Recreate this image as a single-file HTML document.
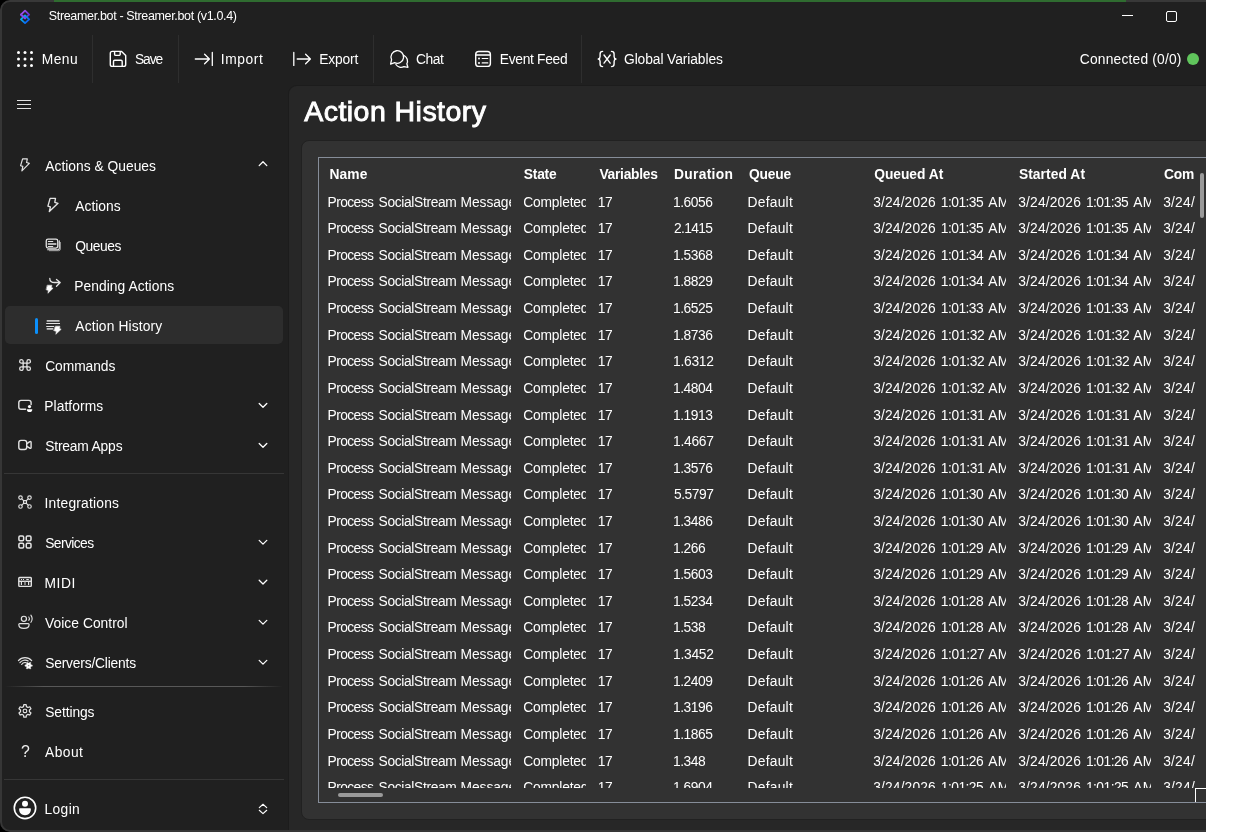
<!DOCTYPE html>
<html lang="en"><head><meta charset="utf-8"><title>Streamer.bot - Action History</title>
<style>
html,body{margin:0;padding:0;background:#fff;}
body{width:1239px;height:832px;overflow:hidden;position:relative;font-family:"Liberation Sans",sans-serif;color:#fff;}
#clip{position:absolute;left:0;top:0;width:1206px;height:832px;overflow:hidden;background:#000;}
#win{will-change:transform;position:absolute;left:0;top:0;width:1230px;height:832px;background:#202020;border-radius:10px 0 0 10px;overflow:hidden;}
.tx{position:absolute;white-space:nowrap;line-height:1;font-size:13.8px;}
.cl{position:absolute;overflow:hidden;top:0;height:832px;left:0;}
.sep{position:absolute;width:1px;background:#2e2e2e;top:35px;height:48px;}
.hsep{position:absolute;height:1px;background:#363636;left:4px;width:280px;}
#content{position:absolute;left:288px;top:85px;width:942px;height:746px;background:#272727;border-top-left-radius:9px;border:1px solid #1c1c1c;border-right:0;border-bottom:0;box-sizing:border-box;}
#card{position:absolute;left:301px;top:140px;width:931px;height:680px;background:#323232;border-radius:8px;border:1px solid #212121;box-sizing:border-box;}
#tbl{position:absolute;left:318px;top:157px;width:900px;height:646px;border:1px solid #868d99;box-sizing:border-box;}
#rows{position:absolute;left:0;top:0;width:1206px;height:788px;overflow:hidden;}
svg{position:absolute;overflow:visible;}
</style></head><body>
<div id="clip">
<div id="win">
<div style="position:absolute;left:0;top:0;width:1230px;height:832px;box-sizing:border-box;border:2px solid #363636;border-top-color:#383838;border-right:0;border-radius:10px 0 0 10px;z-index:5"></div>
<div style="position:absolute;left:54px;top:0;width:1072px;height:2px;background:#2f6c30;z-index:6"></div>

<div class="sep" style="left:92px"></div>
<div class="sep" style="left:178px"></div>
<div class="sep" style="left:373px"></div>
<div class="sep" style="left:581px"></div>
<div id="content"></div><div id="card"></div><div id="tbl"></div>
<div style="position:absolute;left:5px;top:306px;width:278px;height:38px;background:#2d2d2d;border-radius:5px"></div>
<div style="position:absolute;left:35px;top:317.5px;width:3px;height:16px;background:#0b8ffa;border-radius:1.5px"></div>
<div class="hsep" style="top:473px"></div>
<div class="hsep" style="top:779px"></div>
<div style="position:absolute;left:5px;top:686px;width:278px;height:1px;background:linear-gradient(to right,rgba(90,90,90,0),#585858 14%,#585858 86%,rgba(90,90,90,0))"></div>
<div style="position:absolute;left:1200px;top:173px;width:4px;height:45px;background:#9a9a9a;border-radius:2px"></div>
<div style="position:absolute;left:338px;top:793px;width:45px;height:4px;background:#9a9a9a;border-radius:2px"></div>
<div style="position:absolute;left:1195px;top:788px;width:20px;height:14px;border-left:1px solid #fff;border-top:1px solid #fff;box-sizing:border-box"></div>
<div class="tx" style="left:48.80px;top:10.00px;letter-spacing:-0.341px;font-size:12.5px">Streamer.bot - Streamer.bot (v1.0.4)</div>
<div class="tx" style="left:41.80px;top:53.00px;letter-spacing:0.454px">Menu</div>
<div class="tx" style="left:135.00px;top:53.00px;letter-spacing:-1.091px">Save</div>
<div class="tx" style="left:220.80px;top:53.00px;letter-spacing:0.587px">Import</div>
<div class="tx" style="left:319.20px;top:53.00px;letter-spacing:-0.148px">Export</div>
<div class="tx" style="left:416.00px;top:53.00px;letter-spacing:-0.437px">Chat</div>
<div class="tx" style="left:499.80px;top:53.00px;letter-spacing:-0.299px">Event Feed</div>
<div class="tx" style="left:624.00px;top:53.00px;letter-spacing:-0.087px">Global Variables</div>
<div class="tx" style="left:1079.80px;top:53.00px;letter-spacing:0.190px">Connected (0/0)</div>
<div class="tx" style="left:45.30px;top:160.00px;letter-spacing:0.011px">Actions &amp; Queues</div>
<div class="tx" style="left:75.30px;top:200.00px;letter-spacing:0.009px">Actions</div>
<div class="tx" style="left:75.30px;top:240.00px;letter-spacing:-0.425px">Queues</div>
<div class="tx" style="left:74.30px;top:280.00px;letter-spacing:0.056px">Pending Actions</div>
<div class="tx" style="left:75.30px;top:320.00px;letter-spacing:0.138px">Action History</div>
<div class="tx" style="left:45.20px;top:360.00px;letter-spacing:-0.063px">Commands</div>
<div class="tx" style="left:44.30px;top:400.00px;letter-spacing:0.067px">Platforms</div>
<div class="tx" style="left:45.20px;top:440.00px;letter-spacing:-0.165px">Stream Apps</div>
<div class="tx" style="left:44.50px;top:497.00px;letter-spacing:0.218px">Integrations</div>
<div class="tx" style="left:45.20px;top:537.00px;letter-spacing:-0.572px">Services</div>
<div class="tx" style="left:44.50px;top:577.00px;letter-spacing:0.537px">MIDI</div>
<div class="tx" style="left:45.00px;top:617.00px;letter-spacing:0.050px">Voice Control</div>
<div class="tx" style="left:45.20px;top:657.00px;letter-spacing:-0.189px">Servers/Clients</div>
<div class="tx" style="left:45.20px;top:706.00px;letter-spacing:-0.079px">Settings</div>
<div class="tx" style="left:45.00px;top:746.00px;letter-spacing:0.445px">About</div>
<div class="tx" style="left:44.50px;top:803.00px;letter-spacing:0.379px">Login</div>
<div class="tx" style="left:304.30px;top:97.00px;letter-spacing:0.450px;font-size:28.5px;-webkit-text-stroke:0.9px #fff">Action History</div>
<div class="tx" style="left:329.60px;top:168.00px;letter-spacing:0.065px;font-weight:700">Name</div>
<div class="tx" style="left:523.80px;top:168.00px;letter-spacing:-0.216px;font-weight:700">State</div>
<div class="tx" style="left:599.40px;top:168.00px;letter-spacing:-0.253px;font-weight:700">Variables</div>
<div class="tx" style="left:674.00px;top:168.00px;letter-spacing:0.302px;font-weight:700">Duration</div>
<div class="tx" style="left:749.00px;top:168.00px;letter-spacing:-0.190px;font-weight:700">Queue</div>
<div class="tx" style="left:874.20px;top:168.00px;letter-spacing:-0.020px;font-weight:700">Queued At</div>
<div class="tx" style="left:1018.90px;top:168.00px;letter-spacing:0.074px;font-weight:700">Started At</div>
<div class="cl" style="width:1194.2px"><div class="tx" style="left:1164.00px;top:168.00px;letter-spacing:-0.246px;font-weight:700">Completed At</div></div>
<div id="rows">
<div class="cl" style="width:511px"><div class="tx" style="left:327.50px;top:196.00px;letter-spacing:-0.573px">Process</div></div>
<div class="cl" style="width:511px"><div class="tx" style="left:378.60px;top:196.00px;letter-spacing:-0.350px">SocialStream</div></div>
<div class="cl" style="width:511px"><div class="tx" style="left:460.60px;top:196.00px;letter-spacing:-0.087px">Message</div></div>
<div class="cl" style="width:585.7px"><div class="tx" style="left:523.20px;top:196.00px;letter-spacing:-0.182px">Completed</div></div>
<div class="tx" style="left:597.80px;top:196.00px;letter-spacing:-0.473px">17</div>
<div class="tx" style="left:673.00px;top:196.00px;letter-spacing:-0.465px">1.6056</div>
<div class="tx" style="left:747.50px;top:196.00px;letter-spacing:0.253px">Default</div>
<div class="cl" style="width:1006.2px"><div class="tx" style="left:873.20px;top:196.00px;letter-spacing:0.149px">3/24/2026</div></div>
<div class="cl" style="width:1006.2px"><div class="tx" style="left:940.80px;top:196.00px;letter-spacing:-0.527px">1:01:35</div></div>
<div class="cl" style="width:1006.2px"><div class="tx" style="left:988.20px;top:196.00px;letter-spacing:0.300px">AM</div></div>
<div class="cl" style="width:1151.1px"><div class="tx" style="left:1018.30px;top:196.00px;letter-spacing:0.149px">3/24/2026</div></div>
<div class="cl" style="width:1151.1px"><div class="tx" style="left:1085.90px;top:196.00px;letter-spacing:-0.527px">1:01:35</div></div>
<div class="cl" style="width:1151.1px"><div class="tx" style="left:1133.30px;top:196.00px;letter-spacing:0.300px">AM</div></div>
<div class="cl" style="width:1194.9px"><div class="tx" style="left:1163.20px;top:196.00px;letter-spacing:0.212px">3/24/2026</div></div>
<div class="cl" style="width:511px"><div class="tx" style="left:327.50px;top:222.00px;letter-spacing:-0.573px">Process</div></div>
<div class="cl" style="width:511px"><div class="tx" style="left:378.60px;top:222.00px;letter-spacing:-0.350px">SocialStream</div></div>
<div class="cl" style="width:511px"><div class="tx" style="left:460.60px;top:222.00px;letter-spacing:-0.087px">Message</div></div>
<div class="cl" style="width:585.7px"><div class="tx" style="left:523.20px;top:222.00px;letter-spacing:-0.182px">Completed</div></div>
<div class="tx" style="left:597.80px;top:222.00px;letter-spacing:-0.473px">17</div>
<div class="tx" style="left:674.00px;top:222.00px;letter-spacing:-0.665px">2.1415</div>
<div class="tx" style="left:747.50px;top:222.00px;letter-spacing:0.253px">Default</div>
<div class="cl" style="width:1006.2px"><div class="tx" style="left:873.20px;top:222.00px;letter-spacing:0.149px">3/24/2026</div></div>
<div class="cl" style="width:1006.2px"><div class="tx" style="left:940.80px;top:222.00px;letter-spacing:-0.527px">1:01:35</div></div>
<div class="cl" style="width:1006.2px"><div class="tx" style="left:988.20px;top:222.00px;letter-spacing:0.300px">AM</div></div>
<div class="cl" style="width:1151.1px"><div class="tx" style="left:1018.30px;top:222.00px;letter-spacing:0.149px">3/24/2026</div></div>
<div class="cl" style="width:1151.1px"><div class="tx" style="left:1085.90px;top:222.00px;letter-spacing:-0.527px">1:01:35</div></div>
<div class="cl" style="width:1151.1px"><div class="tx" style="left:1133.30px;top:222.00px;letter-spacing:0.300px">AM</div></div>
<div class="cl" style="width:1194.9px"><div class="tx" style="left:1163.20px;top:222.00px;letter-spacing:0.212px">3/24/2026</div></div>
<div class="cl" style="width:511px"><div class="tx" style="left:327.50px;top:249.00px;letter-spacing:-0.573px">Process</div></div>
<div class="cl" style="width:511px"><div class="tx" style="left:378.60px;top:249.00px;letter-spacing:-0.350px">SocialStream</div></div>
<div class="cl" style="width:511px"><div class="tx" style="left:460.60px;top:249.00px;letter-spacing:-0.087px">Message</div></div>
<div class="cl" style="width:585.7px"><div class="tx" style="left:523.20px;top:249.00px;letter-spacing:-0.182px">Completed</div></div>
<div class="tx" style="left:597.80px;top:249.00px;letter-spacing:-0.473px">17</div>
<div class="tx" style="left:673.00px;top:249.00px;letter-spacing:-0.465px">1.5368</div>
<div class="tx" style="left:747.50px;top:249.00px;letter-spacing:0.253px">Default</div>
<div class="cl" style="width:1006.2px"><div class="tx" style="left:873.20px;top:249.00px;letter-spacing:0.149px">3/24/2026</div></div>
<div class="cl" style="width:1006.2px"><div class="tx" style="left:940.80px;top:249.00px;letter-spacing:-0.527px">1:01:34</div></div>
<div class="cl" style="width:1006.2px"><div class="tx" style="left:988.20px;top:249.00px;letter-spacing:0.300px">AM</div></div>
<div class="cl" style="width:1151.1px"><div class="tx" style="left:1018.30px;top:249.00px;letter-spacing:0.149px">3/24/2026</div></div>
<div class="cl" style="width:1151.1px"><div class="tx" style="left:1085.90px;top:249.00px;letter-spacing:-0.527px">1:01:34</div></div>
<div class="cl" style="width:1151.1px"><div class="tx" style="left:1133.30px;top:249.00px;letter-spacing:0.300px">AM</div></div>
<div class="cl" style="width:1194.9px"><div class="tx" style="left:1163.20px;top:249.00px;letter-spacing:0.212px">3/24/2026</div></div>
<div class="cl" style="width:511px"><div class="tx" style="left:327.50px;top:275.00px;letter-spacing:-0.573px">Process</div></div>
<div class="cl" style="width:511px"><div class="tx" style="left:378.60px;top:275.00px;letter-spacing:-0.350px">SocialStream</div></div>
<div class="cl" style="width:511px"><div class="tx" style="left:460.60px;top:275.00px;letter-spacing:-0.087px">Message</div></div>
<div class="cl" style="width:585.7px"><div class="tx" style="left:523.20px;top:275.00px;letter-spacing:-0.182px">Completed</div></div>
<div class="tx" style="left:597.80px;top:275.00px;letter-spacing:-0.473px">17</div>
<div class="tx" style="left:673.00px;top:275.00px;letter-spacing:-0.465px">1.8829</div>
<div class="tx" style="left:747.50px;top:275.00px;letter-spacing:0.253px">Default</div>
<div class="cl" style="width:1006.2px"><div class="tx" style="left:873.20px;top:275.00px;letter-spacing:0.149px">3/24/2026</div></div>
<div class="cl" style="width:1006.2px"><div class="tx" style="left:940.80px;top:275.00px;letter-spacing:-0.527px">1:01:34</div></div>
<div class="cl" style="width:1006.2px"><div class="tx" style="left:988.20px;top:275.00px;letter-spacing:0.300px">AM</div></div>
<div class="cl" style="width:1151.1px"><div class="tx" style="left:1018.30px;top:275.00px;letter-spacing:0.149px">3/24/2026</div></div>
<div class="cl" style="width:1151.1px"><div class="tx" style="left:1085.90px;top:275.00px;letter-spacing:-0.527px">1:01:34</div></div>
<div class="cl" style="width:1151.1px"><div class="tx" style="left:1133.30px;top:275.00px;letter-spacing:0.300px">AM</div></div>
<div class="cl" style="width:1194.9px"><div class="tx" style="left:1163.20px;top:275.00px;letter-spacing:0.212px">3/24/2026</div></div>
<div class="cl" style="width:511px"><div class="tx" style="left:327.50px;top:302.00px;letter-spacing:-0.573px">Process</div></div>
<div class="cl" style="width:511px"><div class="tx" style="left:378.60px;top:302.00px;letter-spacing:-0.350px">SocialStream</div></div>
<div class="cl" style="width:511px"><div class="tx" style="left:460.60px;top:302.00px;letter-spacing:-0.087px">Message</div></div>
<div class="cl" style="width:585.7px"><div class="tx" style="left:523.20px;top:302.00px;letter-spacing:-0.182px">Completed</div></div>
<div class="tx" style="left:597.80px;top:302.00px;letter-spacing:-0.473px">17</div>
<div class="tx" style="left:673.00px;top:302.00px;letter-spacing:-0.465px">1.6525</div>
<div class="tx" style="left:747.50px;top:302.00px;letter-spacing:0.253px">Default</div>
<div class="cl" style="width:1006.2px"><div class="tx" style="left:873.20px;top:302.00px;letter-spacing:0.149px">3/24/2026</div></div>
<div class="cl" style="width:1006.2px"><div class="tx" style="left:940.80px;top:302.00px;letter-spacing:-0.527px">1:01:33</div></div>
<div class="cl" style="width:1006.2px"><div class="tx" style="left:988.20px;top:302.00px;letter-spacing:0.300px">AM</div></div>
<div class="cl" style="width:1151.1px"><div class="tx" style="left:1018.30px;top:302.00px;letter-spacing:0.149px">3/24/2026</div></div>
<div class="cl" style="width:1151.1px"><div class="tx" style="left:1085.90px;top:302.00px;letter-spacing:-0.527px">1:01:33</div></div>
<div class="cl" style="width:1151.1px"><div class="tx" style="left:1133.30px;top:302.00px;letter-spacing:0.300px">AM</div></div>
<div class="cl" style="width:1194.9px"><div class="tx" style="left:1163.20px;top:302.00px;letter-spacing:0.212px">3/24/2026</div></div>
<div class="cl" style="width:511px"><div class="tx" style="left:327.50px;top:329.00px;letter-spacing:-0.573px">Process</div></div>
<div class="cl" style="width:511px"><div class="tx" style="left:378.60px;top:329.00px;letter-spacing:-0.350px">SocialStream</div></div>
<div class="cl" style="width:511px"><div class="tx" style="left:460.60px;top:329.00px;letter-spacing:-0.087px">Message</div></div>
<div class="cl" style="width:585.7px"><div class="tx" style="left:523.20px;top:329.00px;letter-spacing:-0.182px">Completed</div></div>
<div class="tx" style="left:597.80px;top:329.00px;letter-spacing:-0.473px">17</div>
<div class="tx" style="left:673.00px;top:329.00px;letter-spacing:-0.465px">1.8736</div>
<div class="tx" style="left:747.50px;top:329.00px;letter-spacing:0.253px">Default</div>
<div class="cl" style="width:1006.2px"><div class="tx" style="left:873.20px;top:329.00px;letter-spacing:0.149px">3/24/2026</div></div>
<div class="cl" style="width:1006.2px"><div class="tx" style="left:940.80px;top:329.00px;letter-spacing:-0.360px">1:01:32</div></div>
<div class="cl" style="width:1006.2px"><div class="tx" style="left:988.20px;top:329.00px;letter-spacing:0.300px">AM</div></div>
<div class="cl" style="width:1151.1px"><div class="tx" style="left:1018.30px;top:329.00px;letter-spacing:0.149px">3/24/2026</div></div>
<div class="cl" style="width:1151.1px"><div class="tx" style="left:1085.90px;top:329.00px;letter-spacing:-0.360px">1:01:32</div></div>
<div class="cl" style="width:1151.1px"><div class="tx" style="left:1133.30px;top:329.00px;letter-spacing:0.300px">AM</div></div>
<div class="cl" style="width:1194.9px"><div class="tx" style="left:1163.20px;top:329.00px;letter-spacing:0.212px">3/24/2026</div></div>
<div class="cl" style="width:511px"><div class="tx" style="left:327.50px;top:355.00px;letter-spacing:-0.573px">Process</div></div>
<div class="cl" style="width:511px"><div class="tx" style="left:378.60px;top:355.00px;letter-spacing:-0.350px">SocialStream</div></div>
<div class="cl" style="width:511px"><div class="tx" style="left:460.60px;top:355.00px;letter-spacing:-0.087px">Message</div></div>
<div class="cl" style="width:585.7px"><div class="tx" style="left:523.20px;top:355.00px;letter-spacing:-0.182px">Completed</div></div>
<div class="tx" style="left:597.80px;top:355.00px;letter-spacing:-0.473px">17</div>
<div class="tx" style="left:673.00px;top:355.00px;letter-spacing:-0.265px">1.6312</div>
<div class="tx" style="left:747.50px;top:355.00px;letter-spacing:0.253px">Default</div>
<div class="cl" style="width:1006.2px"><div class="tx" style="left:873.20px;top:355.00px;letter-spacing:0.149px">3/24/2026</div></div>
<div class="cl" style="width:1006.2px"><div class="tx" style="left:940.80px;top:355.00px;letter-spacing:-0.360px">1:01:32</div></div>
<div class="cl" style="width:1006.2px"><div class="tx" style="left:988.20px;top:355.00px;letter-spacing:0.300px">AM</div></div>
<div class="cl" style="width:1151.1px"><div class="tx" style="left:1018.30px;top:355.00px;letter-spacing:0.149px">3/24/2026</div></div>
<div class="cl" style="width:1151.1px"><div class="tx" style="left:1085.90px;top:355.00px;letter-spacing:-0.360px">1:01:32</div></div>
<div class="cl" style="width:1151.1px"><div class="tx" style="left:1133.30px;top:355.00px;letter-spacing:0.300px">AM</div></div>
<div class="cl" style="width:1194.9px"><div class="tx" style="left:1163.20px;top:355.00px;letter-spacing:0.212px">3/24/2026</div></div>
<div class="cl" style="width:511px"><div class="tx" style="left:327.50px;top:382.00px;letter-spacing:-0.573px">Process</div></div>
<div class="cl" style="width:511px"><div class="tx" style="left:378.60px;top:382.00px;letter-spacing:-0.350px">SocialStream</div></div>
<div class="cl" style="width:511px"><div class="tx" style="left:460.60px;top:382.00px;letter-spacing:-0.087px">Message</div></div>
<div class="cl" style="width:585.7px"><div class="tx" style="left:523.20px;top:382.00px;letter-spacing:-0.182px">Completed</div></div>
<div class="tx" style="left:597.80px;top:382.00px;letter-spacing:-0.473px">17</div>
<div class="tx" style="left:673.00px;top:382.00px;letter-spacing:-0.465px">1.4804</div>
<div class="tx" style="left:747.50px;top:382.00px;letter-spacing:0.253px">Default</div>
<div class="cl" style="width:1006.2px"><div class="tx" style="left:873.20px;top:382.00px;letter-spacing:0.149px">3/24/2026</div></div>
<div class="cl" style="width:1006.2px"><div class="tx" style="left:940.80px;top:382.00px;letter-spacing:-0.360px">1:01:32</div></div>
<div class="cl" style="width:1006.2px"><div class="tx" style="left:988.20px;top:382.00px;letter-spacing:0.300px">AM</div></div>
<div class="cl" style="width:1151.1px"><div class="tx" style="left:1018.30px;top:382.00px;letter-spacing:0.149px">3/24/2026</div></div>
<div class="cl" style="width:1151.1px"><div class="tx" style="left:1085.90px;top:382.00px;letter-spacing:-0.360px">1:01:32</div></div>
<div class="cl" style="width:1151.1px"><div class="tx" style="left:1133.30px;top:382.00px;letter-spacing:0.300px">AM</div></div>
<div class="cl" style="width:1194.9px"><div class="tx" style="left:1163.20px;top:382.00px;letter-spacing:0.212px">3/24/2026</div></div>
<div class="cl" style="width:511px"><div class="tx" style="left:327.50px;top:409.00px;letter-spacing:-0.573px">Process</div></div>
<div class="cl" style="width:511px"><div class="tx" style="left:378.60px;top:409.00px;letter-spacing:-0.350px">SocialStream</div></div>
<div class="cl" style="width:511px"><div class="tx" style="left:460.60px;top:409.00px;letter-spacing:-0.087px">Message</div></div>
<div class="cl" style="width:585.7px"><div class="tx" style="left:523.20px;top:409.00px;letter-spacing:-0.182px">Completed</div></div>
<div class="tx" style="left:597.80px;top:409.00px;letter-spacing:-0.473px">17</div>
<div class="tx" style="left:673.00px;top:409.00px;letter-spacing:-0.465px">1.1913</div>
<div class="tx" style="left:747.50px;top:409.00px;letter-spacing:0.253px">Default</div>
<div class="cl" style="width:1006.2px"><div class="tx" style="left:873.20px;top:409.00px;letter-spacing:0.149px">3/24/2026</div></div>
<div class="cl" style="width:1006.2px"><div class="tx" style="left:940.80px;top:409.00px;letter-spacing:-0.360px">1:01:31</div></div>
<div class="cl" style="width:1006.2px"><div class="tx" style="left:988.20px;top:409.00px;letter-spacing:0.300px">AM</div></div>
<div class="cl" style="width:1151.1px"><div class="tx" style="left:1018.30px;top:409.00px;letter-spacing:0.149px">3/24/2026</div></div>
<div class="cl" style="width:1151.1px"><div class="tx" style="left:1085.90px;top:409.00px;letter-spacing:-0.360px">1:01:31</div></div>
<div class="cl" style="width:1151.1px"><div class="tx" style="left:1133.30px;top:409.00px;letter-spacing:0.300px">AM</div></div>
<div class="cl" style="width:1194.9px"><div class="tx" style="left:1163.20px;top:409.00px;letter-spacing:0.212px">3/24/2026</div></div>
<div class="cl" style="width:511px"><div class="tx" style="left:327.50px;top:435.00px;letter-spacing:-0.573px">Process</div></div>
<div class="cl" style="width:511px"><div class="tx" style="left:378.60px;top:435.00px;letter-spacing:-0.350px">SocialStream</div></div>
<div class="cl" style="width:511px"><div class="tx" style="left:460.60px;top:435.00px;letter-spacing:-0.087px">Message</div></div>
<div class="cl" style="width:585.7px"><div class="tx" style="left:523.20px;top:435.00px;letter-spacing:-0.182px">Completed</div></div>
<div class="tx" style="left:597.80px;top:435.00px;letter-spacing:-0.473px">17</div>
<div class="tx" style="left:673.00px;top:435.00px;letter-spacing:-0.265px">1.4667</div>
<div class="tx" style="left:747.50px;top:435.00px;letter-spacing:0.253px">Default</div>
<div class="cl" style="width:1006.2px"><div class="tx" style="left:873.20px;top:435.00px;letter-spacing:0.149px">3/24/2026</div></div>
<div class="cl" style="width:1006.2px"><div class="tx" style="left:940.80px;top:435.00px;letter-spacing:-0.360px">1:01:31</div></div>
<div class="cl" style="width:1006.2px"><div class="tx" style="left:988.20px;top:435.00px;letter-spacing:0.300px">AM</div></div>
<div class="cl" style="width:1151.1px"><div class="tx" style="left:1018.30px;top:435.00px;letter-spacing:0.149px">3/24/2026</div></div>
<div class="cl" style="width:1151.1px"><div class="tx" style="left:1085.90px;top:435.00px;letter-spacing:-0.360px">1:01:31</div></div>
<div class="cl" style="width:1151.1px"><div class="tx" style="left:1133.30px;top:435.00px;letter-spacing:0.300px">AM</div></div>
<div class="cl" style="width:1194.9px"><div class="tx" style="left:1163.20px;top:435.00px;letter-spacing:0.212px">3/24/2026</div></div>
<div class="cl" style="width:511px"><div class="tx" style="left:327.50px;top:462.00px;letter-spacing:-0.573px">Process</div></div>
<div class="cl" style="width:511px"><div class="tx" style="left:378.60px;top:462.00px;letter-spacing:-0.350px">SocialStream</div></div>
<div class="cl" style="width:511px"><div class="tx" style="left:460.60px;top:462.00px;letter-spacing:-0.087px">Message</div></div>
<div class="cl" style="width:585.7px"><div class="tx" style="left:523.20px;top:462.00px;letter-spacing:-0.182px">Completed</div></div>
<div class="tx" style="left:597.80px;top:462.00px;letter-spacing:-0.473px">17</div>
<div class="tx" style="left:673.00px;top:462.00px;letter-spacing:-0.465px">1.3576</div>
<div class="tx" style="left:747.50px;top:462.00px;letter-spacing:0.253px">Default</div>
<div class="cl" style="width:1006.2px"><div class="tx" style="left:873.20px;top:462.00px;letter-spacing:0.149px">3/24/2026</div></div>
<div class="cl" style="width:1006.2px"><div class="tx" style="left:940.80px;top:462.00px;letter-spacing:-0.360px">1:01:31</div></div>
<div class="cl" style="width:1006.2px"><div class="tx" style="left:988.20px;top:462.00px;letter-spacing:0.300px">AM</div></div>
<div class="cl" style="width:1151.1px"><div class="tx" style="left:1018.30px;top:462.00px;letter-spacing:0.149px">3/24/2026</div></div>
<div class="cl" style="width:1151.1px"><div class="tx" style="left:1085.90px;top:462.00px;letter-spacing:-0.360px">1:01:31</div></div>
<div class="cl" style="width:1151.1px"><div class="tx" style="left:1133.30px;top:462.00px;letter-spacing:0.300px">AM</div></div>
<div class="cl" style="width:1194.9px"><div class="tx" style="left:1163.20px;top:462.00px;letter-spacing:0.212px">3/24/2026</div></div>
<div class="cl" style="width:511px"><div class="tx" style="left:327.50px;top:488.00px;letter-spacing:-0.573px">Process</div></div>
<div class="cl" style="width:511px"><div class="tx" style="left:378.60px;top:488.00px;letter-spacing:-0.350px">SocialStream</div></div>
<div class="cl" style="width:511px"><div class="tx" style="left:460.60px;top:488.00px;letter-spacing:-0.087px">Message</div></div>
<div class="cl" style="width:585.7px"><div class="tx" style="left:523.20px;top:488.00px;letter-spacing:-0.182px">Completed</div></div>
<div class="tx" style="left:597.80px;top:488.00px;letter-spacing:-0.473px">17</div>
<div class="tx" style="left:674.00px;top:488.00px;letter-spacing:-0.465px">5.5797</div>
<div class="tx" style="left:747.50px;top:488.00px;letter-spacing:0.253px">Default</div>
<div class="cl" style="width:1006.2px"><div class="tx" style="left:873.20px;top:488.00px;letter-spacing:0.149px">3/24/2026</div></div>
<div class="cl" style="width:1006.2px"><div class="tx" style="left:940.80px;top:488.00px;letter-spacing:-0.527px">1:01:30</div></div>
<div class="cl" style="width:1006.2px"><div class="tx" style="left:988.20px;top:488.00px;letter-spacing:0.300px">AM</div></div>
<div class="cl" style="width:1151.1px"><div class="tx" style="left:1018.30px;top:488.00px;letter-spacing:0.149px">3/24/2026</div></div>
<div class="cl" style="width:1151.1px"><div class="tx" style="left:1085.90px;top:488.00px;letter-spacing:-0.527px">1:01:30</div></div>
<div class="cl" style="width:1151.1px"><div class="tx" style="left:1133.30px;top:488.00px;letter-spacing:0.300px">AM</div></div>
<div class="cl" style="width:1194.9px"><div class="tx" style="left:1163.20px;top:488.00px;letter-spacing:0.212px">3/24/2026</div></div>
<div class="cl" style="width:511px"><div class="tx" style="left:327.50px;top:515.00px;letter-spacing:-0.573px">Process</div></div>
<div class="cl" style="width:511px"><div class="tx" style="left:378.60px;top:515.00px;letter-spacing:-0.350px">SocialStream</div></div>
<div class="cl" style="width:511px"><div class="tx" style="left:460.60px;top:515.00px;letter-spacing:-0.087px">Message</div></div>
<div class="cl" style="width:585.7px"><div class="tx" style="left:523.20px;top:515.00px;letter-spacing:-0.182px">Completed</div></div>
<div class="tx" style="left:597.80px;top:515.00px;letter-spacing:-0.473px">17</div>
<div class="tx" style="left:673.00px;top:515.00px;letter-spacing:-0.465px">1.3486</div>
<div class="tx" style="left:747.50px;top:515.00px;letter-spacing:0.253px">Default</div>
<div class="cl" style="width:1006.2px"><div class="tx" style="left:873.20px;top:515.00px;letter-spacing:0.149px">3/24/2026</div></div>
<div class="cl" style="width:1006.2px"><div class="tx" style="left:940.80px;top:515.00px;letter-spacing:-0.527px">1:01:30</div></div>
<div class="cl" style="width:1006.2px"><div class="tx" style="left:988.20px;top:515.00px;letter-spacing:0.300px">AM</div></div>
<div class="cl" style="width:1151.1px"><div class="tx" style="left:1018.30px;top:515.00px;letter-spacing:0.149px">3/24/2026</div></div>
<div class="cl" style="width:1151.1px"><div class="tx" style="left:1085.90px;top:515.00px;letter-spacing:-0.527px">1:01:30</div></div>
<div class="cl" style="width:1151.1px"><div class="tx" style="left:1133.30px;top:515.00px;letter-spacing:0.300px">AM</div></div>
<div class="cl" style="width:1194.9px"><div class="tx" style="left:1163.20px;top:515.00px;letter-spacing:0.212px">3/24/2026</div></div>
<div class="cl" style="width:511px"><div class="tx" style="left:327.50px;top:542.00px;letter-spacing:-0.573px">Process</div></div>
<div class="cl" style="width:511px"><div class="tx" style="left:378.60px;top:542.00px;letter-spacing:-0.350px">SocialStream</div></div>
<div class="cl" style="width:511px"><div class="tx" style="left:460.60px;top:542.00px;letter-spacing:-0.087px">Message</div></div>
<div class="cl" style="width:585.7px"><div class="tx" style="left:523.20px;top:542.00px;letter-spacing:-0.182px">Completed</div></div>
<div class="tx" style="left:597.80px;top:542.00px;letter-spacing:-0.473px">17</div>
<div class="tx" style="left:673.00px;top:542.00px;letter-spacing:-0.465px">1.266</div>
<div class="tx" style="left:747.50px;top:542.00px;letter-spacing:0.253px">Default</div>
<div class="cl" style="width:1006.2px"><div class="tx" style="left:873.20px;top:542.00px;letter-spacing:0.149px">3/24/2026</div></div>
<div class="cl" style="width:1006.2px"><div class="tx" style="left:940.80px;top:542.00px;letter-spacing:-0.527px">1:01:29</div></div>
<div class="cl" style="width:1006.2px"><div class="tx" style="left:988.20px;top:542.00px;letter-spacing:0.300px">AM</div></div>
<div class="cl" style="width:1151.1px"><div class="tx" style="left:1018.30px;top:542.00px;letter-spacing:0.149px">3/24/2026</div></div>
<div class="cl" style="width:1151.1px"><div class="tx" style="left:1085.90px;top:542.00px;letter-spacing:-0.527px">1:01:29</div></div>
<div class="cl" style="width:1151.1px"><div class="tx" style="left:1133.30px;top:542.00px;letter-spacing:0.300px">AM</div></div>
<div class="cl" style="width:1194.9px"><div class="tx" style="left:1163.20px;top:542.00px;letter-spacing:0.212px">3/24/2026</div></div>
<div class="cl" style="width:511px"><div class="tx" style="left:327.50px;top:568.00px;letter-spacing:-0.573px">Process</div></div>
<div class="cl" style="width:511px"><div class="tx" style="left:378.60px;top:568.00px;letter-spacing:-0.350px">SocialStream</div></div>
<div class="cl" style="width:511px"><div class="tx" style="left:460.60px;top:568.00px;letter-spacing:-0.087px">Message</div></div>
<div class="cl" style="width:585.7px"><div class="tx" style="left:523.20px;top:568.00px;letter-spacing:-0.182px">Completed</div></div>
<div class="tx" style="left:597.80px;top:568.00px;letter-spacing:-0.473px">17</div>
<div class="tx" style="left:673.00px;top:568.00px;letter-spacing:-0.465px">1.5603</div>
<div class="tx" style="left:747.50px;top:568.00px;letter-spacing:0.253px">Default</div>
<div class="cl" style="width:1006.2px"><div class="tx" style="left:873.20px;top:568.00px;letter-spacing:0.149px">3/24/2026</div></div>
<div class="cl" style="width:1006.2px"><div class="tx" style="left:940.80px;top:568.00px;letter-spacing:-0.527px">1:01:29</div></div>
<div class="cl" style="width:1006.2px"><div class="tx" style="left:988.20px;top:568.00px;letter-spacing:0.300px">AM</div></div>
<div class="cl" style="width:1151.1px"><div class="tx" style="left:1018.30px;top:568.00px;letter-spacing:0.149px">3/24/2026</div></div>
<div class="cl" style="width:1151.1px"><div class="tx" style="left:1085.90px;top:568.00px;letter-spacing:-0.527px">1:01:29</div></div>
<div class="cl" style="width:1151.1px"><div class="tx" style="left:1133.30px;top:568.00px;letter-spacing:0.300px">AM</div></div>
<div class="cl" style="width:1194.9px"><div class="tx" style="left:1163.20px;top:568.00px;letter-spacing:0.212px">3/24/2026</div></div>
<div class="cl" style="width:511px"><div class="tx" style="left:327.50px;top:595.00px;letter-spacing:-0.573px">Process</div></div>
<div class="cl" style="width:511px"><div class="tx" style="left:378.60px;top:595.00px;letter-spacing:-0.350px">SocialStream</div></div>
<div class="cl" style="width:511px"><div class="tx" style="left:460.60px;top:595.00px;letter-spacing:-0.087px">Message</div></div>
<div class="cl" style="width:585.7px"><div class="tx" style="left:523.20px;top:595.00px;letter-spacing:-0.182px">Completed</div></div>
<div class="tx" style="left:597.80px;top:595.00px;letter-spacing:-0.473px">17</div>
<div class="tx" style="left:673.00px;top:595.00px;letter-spacing:-0.465px">1.5234</div>
<div class="tx" style="left:747.50px;top:595.00px;letter-spacing:0.253px">Default</div>
<div class="cl" style="width:1006.2px"><div class="tx" style="left:873.20px;top:595.00px;letter-spacing:0.149px">3/24/2026</div></div>
<div class="cl" style="width:1006.2px"><div class="tx" style="left:940.80px;top:595.00px;letter-spacing:-0.527px">1:01:28</div></div>
<div class="cl" style="width:1006.2px"><div class="tx" style="left:988.20px;top:595.00px;letter-spacing:0.300px">AM</div></div>
<div class="cl" style="width:1151.1px"><div class="tx" style="left:1018.30px;top:595.00px;letter-spacing:0.149px">3/24/2026</div></div>
<div class="cl" style="width:1151.1px"><div class="tx" style="left:1085.90px;top:595.00px;letter-spacing:-0.527px">1:01:28</div></div>
<div class="cl" style="width:1151.1px"><div class="tx" style="left:1133.30px;top:595.00px;letter-spacing:0.300px">AM</div></div>
<div class="cl" style="width:1194.9px"><div class="tx" style="left:1163.20px;top:595.00px;letter-spacing:0.212px">3/24/2026</div></div>
<div class="cl" style="width:511px"><div class="tx" style="left:327.50px;top:621.00px;letter-spacing:-0.573px">Process</div></div>
<div class="cl" style="width:511px"><div class="tx" style="left:378.60px;top:621.00px;letter-spacing:-0.350px">SocialStream</div></div>
<div class="cl" style="width:511px"><div class="tx" style="left:460.60px;top:621.00px;letter-spacing:-0.087px">Message</div></div>
<div class="cl" style="width:585.7px"><div class="tx" style="left:523.20px;top:621.00px;letter-spacing:-0.182px">Completed</div></div>
<div class="tx" style="left:597.80px;top:621.00px;letter-spacing:-0.473px">17</div>
<div class="tx" style="left:673.00px;top:621.00px;letter-spacing:-0.465px">1.538</div>
<div class="tx" style="left:747.50px;top:621.00px;letter-spacing:0.253px">Default</div>
<div class="cl" style="width:1006.2px"><div class="tx" style="left:873.20px;top:621.00px;letter-spacing:0.149px">3/24/2026</div></div>
<div class="cl" style="width:1006.2px"><div class="tx" style="left:940.80px;top:621.00px;letter-spacing:-0.527px">1:01:28</div></div>
<div class="cl" style="width:1006.2px"><div class="tx" style="left:988.20px;top:621.00px;letter-spacing:0.300px">AM</div></div>
<div class="cl" style="width:1151.1px"><div class="tx" style="left:1018.30px;top:621.00px;letter-spacing:0.149px">3/24/2026</div></div>
<div class="cl" style="width:1151.1px"><div class="tx" style="left:1085.90px;top:621.00px;letter-spacing:-0.527px">1:01:28</div></div>
<div class="cl" style="width:1151.1px"><div class="tx" style="left:1133.30px;top:621.00px;letter-spacing:0.300px">AM</div></div>
<div class="cl" style="width:1194.9px"><div class="tx" style="left:1163.20px;top:621.00px;letter-spacing:0.212px">3/24/2026</div></div>
<div class="cl" style="width:511px"><div class="tx" style="left:327.50px;top:648.00px;letter-spacing:-0.573px">Process</div></div>
<div class="cl" style="width:511px"><div class="tx" style="left:378.60px;top:648.00px;letter-spacing:-0.350px">SocialStream</div></div>
<div class="cl" style="width:511px"><div class="tx" style="left:460.60px;top:648.00px;letter-spacing:-0.087px">Message</div></div>
<div class="cl" style="width:585.7px"><div class="tx" style="left:523.20px;top:648.00px;letter-spacing:-0.182px">Completed</div></div>
<div class="tx" style="left:597.80px;top:648.00px;letter-spacing:-0.473px">17</div>
<div class="tx" style="left:673.00px;top:648.00px;letter-spacing:-0.265px">1.3452</div>
<div class="tx" style="left:747.50px;top:648.00px;letter-spacing:0.253px">Default</div>
<div class="cl" style="width:1006.2px"><div class="tx" style="left:873.20px;top:648.00px;letter-spacing:0.149px">3/24/2026</div></div>
<div class="cl" style="width:1006.2px"><div class="tx" style="left:940.80px;top:648.00px;letter-spacing:-0.360px">1:01:27</div></div>
<div class="cl" style="width:1006.2px"><div class="tx" style="left:988.20px;top:648.00px;letter-spacing:0.300px">AM</div></div>
<div class="cl" style="width:1151.1px"><div class="tx" style="left:1018.30px;top:648.00px;letter-spacing:0.149px">3/24/2026</div></div>
<div class="cl" style="width:1151.1px"><div class="tx" style="left:1085.90px;top:648.00px;letter-spacing:-0.360px">1:01:27</div></div>
<div class="cl" style="width:1151.1px"><div class="tx" style="left:1133.30px;top:648.00px;letter-spacing:0.300px">AM</div></div>
<div class="cl" style="width:1194.9px"><div class="tx" style="left:1163.20px;top:648.00px;letter-spacing:0.212px">3/24/2026</div></div>
<div class="cl" style="width:511px"><div class="tx" style="left:327.50px;top:675.00px;letter-spacing:-0.573px">Process</div></div>
<div class="cl" style="width:511px"><div class="tx" style="left:378.60px;top:675.00px;letter-spacing:-0.350px">SocialStream</div></div>
<div class="cl" style="width:511px"><div class="tx" style="left:460.60px;top:675.00px;letter-spacing:-0.087px">Message</div></div>
<div class="cl" style="width:585.7px"><div class="tx" style="left:523.20px;top:675.00px;letter-spacing:-0.182px">Completed</div></div>
<div class="tx" style="left:597.80px;top:675.00px;letter-spacing:-0.473px">17</div>
<div class="tx" style="left:673.00px;top:675.00px;letter-spacing:-0.465px">1.2409</div>
<div class="tx" style="left:747.50px;top:675.00px;letter-spacing:0.253px">Default</div>
<div class="cl" style="width:1006.2px"><div class="tx" style="left:873.20px;top:675.00px;letter-spacing:0.149px">3/24/2026</div></div>
<div class="cl" style="width:1006.2px"><div class="tx" style="left:940.80px;top:675.00px;letter-spacing:-0.527px">1:01:26</div></div>
<div class="cl" style="width:1006.2px"><div class="tx" style="left:988.20px;top:675.00px;letter-spacing:0.300px">AM</div></div>
<div class="cl" style="width:1151.1px"><div class="tx" style="left:1018.30px;top:675.00px;letter-spacing:0.149px">3/24/2026</div></div>
<div class="cl" style="width:1151.1px"><div class="tx" style="left:1085.90px;top:675.00px;letter-spacing:-0.527px">1:01:26</div></div>
<div class="cl" style="width:1151.1px"><div class="tx" style="left:1133.30px;top:675.00px;letter-spacing:0.300px">AM</div></div>
<div class="cl" style="width:1194.9px"><div class="tx" style="left:1163.20px;top:675.00px;letter-spacing:0.212px">3/24/2026</div></div>
<div class="cl" style="width:511px"><div class="tx" style="left:327.50px;top:701.00px;letter-spacing:-0.573px">Process</div></div>
<div class="cl" style="width:511px"><div class="tx" style="left:378.60px;top:701.00px;letter-spacing:-0.350px">SocialStream</div></div>
<div class="cl" style="width:511px"><div class="tx" style="left:460.60px;top:701.00px;letter-spacing:-0.087px">Message</div></div>
<div class="cl" style="width:585.7px"><div class="tx" style="left:523.20px;top:701.00px;letter-spacing:-0.182px">Completed</div></div>
<div class="tx" style="left:597.80px;top:701.00px;letter-spacing:-0.473px">17</div>
<div class="tx" style="left:673.00px;top:701.00px;letter-spacing:-0.465px">1.3196</div>
<div class="tx" style="left:747.50px;top:701.00px;letter-spacing:0.253px">Default</div>
<div class="cl" style="width:1006.2px"><div class="tx" style="left:873.20px;top:701.00px;letter-spacing:0.149px">3/24/2026</div></div>
<div class="cl" style="width:1006.2px"><div class="tx" style="left:940.80px;top:701.00px;letter-spacing:-0.527px">1:01:26</div></div>
<div class="cl" style="width:1006.2px"><div class="tx" style="left:988.20px;top:701.00px;letter-spacing:0.300px">AM</div></div>
<div class="cl" style="width:1151.1px"><div class="tx" style="left:1018.30px;top:701.00px;letter-spacing:0.149px">3/24/2026</div></div>
<div class="cl" style="width:1151.1px"><div class="tx" style="left:1085.90px;top:701.00px;letter-spacing:-0.527px">1:01:26</div></div>
<div class="cl" style="width:1151.1px"><div class="tx" style="left:1133.30px;top:701.00px;letter-spacing:0.300px">AM</div></div>
<div class="cl" style="width:1194.9px"><div class="tx" style="left:1163.20px;top:701.00px;letter-spacing:0.212px">3/24/2026</div></div>
<div class="cl" style="width:511px"><div class="tx" style="left:327.50px;top:728.00px;letter-spacing:-0.573px">Process</div></div>
<div class="cl" style="width:511px"><div class="tx" style="left:378.60px;top:728.00px;letter-spacing:-0.350px">SocialStream</div></div>
<div class="cl" style="width:511px"><div class="tx" style="left:460.60px;top:728.00px;letter-spacing:-0.087px">Message</div></div>
<div class="cl" style="width:585.7px"><div class="tx" style="left:523.20px;top:728.00px;letter-spacing:-0.182px">Completed</div></div>
<div class="tx" style="left:597.80px;top:728.00px;letter-spacing:-0.473px">17</div>
<div class="tx" style="left:673.00px;top:728.00px;letter-spacing:-0.465px">1.1865</div>
<div class="tx" style="left:747.50px;top:728.00px;letter-spacing:0.253px">Default</div>
<div class="cl" style="width:1006.2px"><div class="tx" style="left:873.20px;top:728.00px;letter-spacing:0.149px">3/24/2026</div></div>
<div class="cl" style="width:1006.2px"><div class="tx" style="left:940.80px;top:728.00px;letter-spacing:-0.527px">1:01:26</div></div>
<div class="cl" style="width:1006.2px"><div class="tx" style="left:988.20px;top:728.00px;letter-spacing:0.300px">AM</div></div>
<div class="cl" style="width:1151.1px"><div class="tx" style="left:1018.30px;top:728.00px;letter-spacing:0.149px">3/24/2026</div></div>
<div class="cl" style="width:1151.1px"><div class="tx" style="left:1085.90px;top:728.00px;letter-spacing:-0.527px">1:01:26</div></div>
<div class="cl" style="width:1151.1px"><div class="tx" style="left:1133.30px;top:728.00px;letter-spacing:0.300px">AM</div></div>
<div class="cl" style="width:1194.9px"><div class="tx" style="left:1163.20px;top:728.00px;letter-spacing:0.212px">3/24/2026</div></div>
<div class="cl" style="width:511px"><div class="tx" style="left:327.50px;top:755.00px;letter-spacing:-0.573px">Process</div></div>
<div class="cl" style="width:511px"><div class="tx" style="left:378.60px;top:755.00px;letter-spacing:-0.350px">SocialStream</div></div>
<div class="cl" style="width:511px"><div class="tx" style="left:460.60px;top:755.00px;letter-spacing:-0.087px">Message</div></div>
<div class="cl" style="width:585.7px"><div class="tx" style="left:523.20px;top:755.00px;letter-spacing:-0.182px">Completed</div></div>
<div class="tx" style="left:597.80px;top:755.00px;letter-spacing:-0.473px">17</div>
<div class="tx" style="left:673.00px;top:755.00px;letter-spacing:-0.465px">1.348</div>
<div class="tx" style="left:747.50px;top:755.00px;letter-spacing:0.253px">Default</div>
<div class="cl" style="width:1006.2px"><div class="tx" style="left:873.20px;top:755.00px;letter-spacing:0.149px">3/24/2026</div></div>
<div class="cl" style="width:1006.2px"><div class="tx" style="left:940.80px;top:755.00px;letter-spacing:-0.527px">1:01:26</div></div>
<div class="cl" style="width:1006.2px"><div class="tx" style="left:988.20px;top:755.00px;letter-spacing:0.300px">AM</div></div>
<div class="cl" style="width:1151.1px"><div class="tx" style="left:1018.30px;top:755.00px;letter-spacing:0.149px">3/24/2026</div></div>
<div class="cl" style="width:1151.1px"><div class="tx" style="left:1085.90px;top:755.00px;letter-spacing:-0.527px">1:01:26</div></div>
<div class="cl" style="width:1151.1px"><div class="tx" style="left:1133.30px;top:755.00px;letter-spacing:0.300px">AM</div></div>
<div class="cl" style="width:1194.9px"><div class="tx" style="left:1163.20px;top:755.00px;letter-spacing:0.212px">3/24/2026</div></div>
<div class="cl" style="width:511px"><div class="tx" style="left:327.50px;top:781.00px;letter-spacing:-0.573px">Process</div></div>
<div class="cl" style="width:511px"><div class="tx" style="left:378.60px;top:781.00px;letter-spacing:-0.350px">SocialStream</div></div>
<div class="cl" style="width:511px"><div class="tx" style="left:460.60px;top:781.00px;letter-spacing:-0.087px">Message</div></div>
<div class="cl" style="width:585.7px"><div class="tx" style="left:523.20px;top:781.00px;letter-spacing:-0.182px">Completed</div></div>
<div class="tx" style="left:597.80px;top:781.00px;letter-spacing:-0.473px">17</div>
<div class="tx" style="left:673.00px;top:781.00px;letter-spacing:-0.465px">1.6904</div>
<div class="tx" style="left:747.50px;top:781.00px;letter-spacing:0.253px">Default</div>
<div class="cl" style="width:1006.2px"><div class="tx" style="left:873.20px;top:781.00px;letter-spacing:0.149px">3/24/2026</div></div>
<div class="cl" style="width:1006.2px"><div class="tx" style="left:940.80px;top:781.00px;letter-spacing:-0.527px">1:01:25</div></div>
<div class="cl" style="width:1006.2px"><div class="tx" style="left:988.20px;top:781.00px;letter-spacing:0.300px">AM</div></div>
<div class="cl" style="width:1151.1px"><div class="tx" style="left:1018.30px;top:781.00px;letter-spacing:0.149px">3/24/2026</div></div>
<div class="cl" style="width:1151.1px"><div class="tx" style="left:1085.90px;top:781.00px;letter-spacing:-0.527px">1:01:25</div></div>
<div class="cl" style="width:1151.1px"><div class="tx" style="left:1133.30px;top:781.00px;letter-spacing:0.300px">AM</div></div>
<div class="cl" style="width:1194.9px"><div class="tx" style="left:1163.20px;top:781.00px;letter-spacing:0.212px">3/24/2026</div></div>
</div>
<svg width="1206" height="832" viewBox="0 0 1206 832" style="left:0;top:0" fill="none" stroke="#fff" stroke-width="1.3" stroke-linecap="round" stroke-linejoin="round">
<defs>
<linearGradient id="gp" x1="0" y1="0" x2="1" y2=".6"><stop offset="0" stop-color="#ae5af8"/><stop offset="1" stop-color="#6131d2"/></linearGradient>
<linearGradient id="gb" x1="0" y1="0" x2="1" y2=".6"><stop offset="0" stop-color="#04c8ea"/><stop offset="1" stop-color="#0a5cf6"/></linearGradient>
</defs>
<path d="M25.05 10.700000000000001 L29.15 14.55 L25.05 18.400000000000002 L20.950000000000003 14.55 Z" stroke="url(#gp)" stroke-width="1.85"/>
<path d="M25.05 15.450000000000001 L29.15 19.3 L25.05 23.150000000000002 L20.950000000000003 19.3 Z" stroke="url(#gb)" stroke-width="1.85"/>
<path d="M20.95 14.55 L25.05 18.4" stroke="#8b46e8" stroke-width="1.85"/>
<path d="M1122 15.5 H1133" stroke-width="1" stroke-linecap="butt"/>
<rect x="1166.5" y="11.5" width="10" height="10" rx="1.5" stroke-width="1"/>
<circle cx="18.5" cy="52.5" r="1.5" fill="#fff" stroke="none"/>
<circle cx="25" cy="52.5" r="1.5" fill="#fff" stroke="none"/>
<circle cx="31.5" cy="52.5" r="1.5" fill="#fff" stroke="none"/>
<circle cx="18.5" cy="59" r="1.5" fill="#fff" stroke="none"/>
<circle cx="25" cy="59" r="1.5" fill="#fff" stroke="none"/>
<circle cx="31.5" cy="59" r="1.5" fill="#fff" stroke="none"/>
<circle cx="18.5" cy="65.5" r="1.5" fill="#fff" stroke="none"/>
<circle cx="25" cy="65.5" r="1.5" fill="#fff" stroke="none"/>
<circle cx="31.5" cy="65.5" r="1.5" fill="#fff" stroke="none"/>
<g stroke-width="1.4"><path d="M112.3 51.4 H121.6 L125.7 55.5 V64.4 a2 2 0 0 1 -2 2 H112.3 a2 2 0 0 1 -2 -2 V53.4 a2 2 0 0 1 2 -2 Z"/><path d="M114.6 51.6 V54.2 a1.2 1.2 0 0 0 1.2 1.2 H119 a1.2 1.2 0 0 0 1.2 -1.2 V51.6"/><path d="M113.5 66.2 V61.4 a1.2 1.2 0 0 1 1.2 -1.2 H121 a1.2 1.2 0 0 1 1.2 1.2 V66.2"/></g>
<g stroke-width="1.3"><path d="M195.3 59 H209 M204.6 54.2 L209.4 59 L204.6 63.8 M212.3 52.4 V65.4"/></g>
<g stroke-width="1.3"><path d="M293.8 52.4 V65.4 M297.2 59 H310 M305.6 54.2 L310.4 59 L305.6 63.8"/></g>
<g stroke-width="1.3"><path d="M394.64 62.71 A6.3 6.3 0 1 0 391.59 59.66 L390.6 64.2 Z"/><path d="M404.4 55.7 A6.1 6.1 0 0 1 406.85 63.7 L407.9 67.3 L403.9 66.6 A6.1 6.1 0 0 1 395.9 64.5"/></g>
<g stroke-width="1.4"><rect x="475.7" y="51.55" width="14.7" height="14.85" rx="3"/><path d="M475.9 55 H490.2"/><path d="M482.2 58.5 H487.8 M482.2 62.9 H487.8" stroke-width="1.2"/><circle cx="479" cy="58.5" r="1" fill="#fff" stroke="none"/><circle cx="479" cy="62.9" r="1" fill="#fff" stroke="none"/></g>
<g stroke-width="1.4"><path d="M602.6 51.4 C600.8 51.4 600.1 52.3 600.1 54 V56.4 C600.1 58 599.4 58.8 598.3 59 C599.4 59.2 600.1 60 600.1 61.6 V64 C600.1 65.7 600.8 66.6 602.6 66.6"/><path d="M611.5 51.4 C613.3 51.4 614.1 52.3 614.1 54 V56.4 C614.1 58 614.8 58.8 615.9 59 C614.8 59.2 614.1 60 614.1 61.6 V64 C614.1 65.7 613.3 66.6 611.5 66.6"/><path d="M604 55 L610.2 63.1 M610.2 55 L604 63.1"/></g>
<circle cx="1193" cy="59" r="6" fill="#60c55c" stroke="none"/>
<g stroke="#e3e3e3">
<path d="M17 100.5 H31 M17 104.5 H31 M17 108.5 H31" stroke-width="1" stroke-linecap="butt"/>
<path d="M22.60 158.90 L27.30 158.90 L26.60 162.50 L29.30 163.40 L21.90 170.80 L22.80 166.40 L20.60 165.70 Z" stroke-width="1.2"/>
<path d="M50.10 198.40 L55.50 198.40 L54.80 202.30 L58.00 203.30 L49.30 211.60 L50.40 206.90 L47.90 206.10 Z" stroke-width="1.35"/>
<g stroke-width="1.3"><rect x="46.25" y="239.15" width="11.5" height="8.95" rx="1.8"/><path d="M48.3 241.5 H52.8 M48.3 246.5 H52.8" stroke-width="1"/><path d="M48.3 244 H55.8" stroke-width="1.5"/><path d="M59.3 240.8 V248 a1.8 1.8 0 0 1 -1.8 1.8 H47.6" stroke-width="1.1"/><path d="M60.4 242.4 V248.9 a1.8 1.8 0 0 1 -1.8 1.8 H49.4" stroke-width=".9" opacity=".7"/></g>
<path d="M49.8 278.4 C49.8 281.4 51.8 282.5 54.6 282.5 H60 M56.5 279.5 L60.2 282.5 L56.5 286.3" stroke-width="1.3"/>
<path d="M47.50 285.20 L51.90 285.20 L51.40 287.50 L53.10 288.20 L47.90 293.30 L48.30 290.40 L46.40 289.80 Z" fill="#fff" stroke-width=".6"/>
<path d="M46.7 320.9 H59.5 M46.7 328.9 H53.6" stroke="#c4c4c4" stroke-width="1.8" stroke-linecap="butt"/>
<path d="M46.2 323.5 H60 M46.2 326.5 H54.6" stroke-width="1.1" stroke-linecap="butt"/>
<path d="M55.60 326.20 L59.90 326.20 L59.60 328.50 L61.20 329.30 L55.80 334.30 L56.30 331.40 L53.90 330.60 Z" fill="#2d2d2d" stroke="#2d2d2d" stroke-width="2.6"/>
<path d="M55.60 326.20 L59.90 326.20 L59.60 328.50 L61.20 329.30 L55.80 334.30 L56.30 331.40 L53.90 330.60 Z" fill="#fff" stroke-width=".6"/>
<g stroke-width="1.3"><path d="M23.150000000000002 363.15000000000003 H26.95 V366.95 H23.150000000000002 Z"/><path d="M23.150000000000002 363.15000000000003 V361.40000000000003 A1.75 1.75 0 1 0 21.400000000000002 363.15000000000003 Z"/><path d="M26.95 363.15000000000003 H28.7 A1.75 1.75 0 1 0 26.95 361.40000000000003 Z"/><path d="M26.95 366.95 V368.7 A1.75 1.75 0 1 0 28.7 366.95 Z"/><path d="M23.150000000000002 366.95 H21.400000000000002 A1.75 1.75 0 1 0 23.150000000000002 368.7 Z"/></g>
<path d="M31.1 404.6 V402.6 a2.2 2.2 0 0 0 -2.2 -2.2 H21 a2.2 2.2 0 0 0 -2.2 2.2 V407.1 a2.2 2.2 0 0 0 2.2 2.2 H25.6" stroke-width="1.4"/>
<circle cx="29.5" cy="406.6" r="1.6" fill="#fff" stroke="none"/>
<path d="M26.8 409.2 H32.3 C32.3 411.2 31.2 412 29.55 412 C27.9 412 26.8 411.2 26.8 409.2 Z" fill="#fff" stroke="none"/>
<g stroke-width="1.4"><rect x="18.8" y="440.4" width="7.9" height="9.1" rx="2.2"/><path d="M26.9 443.6 L29.8 441.7 a.8 .8 0 0 1 1.3 .7 V447.5 a.8 .8 0 0 1 -1.3 .7 L26.9 446.3"/></g>
<g stroke-width="1.15"><rect x="23.55" y="500.55" width="2.9" height="2.9"/>
<circle cx="20.5" cy="497.55" r="1.75"/>
<path d="M23.4 500.4 L21.8 498.8"/>
<circle cx="20.5" cy="506.45" r="1.75"/>
<path d="M23.4 503.6 L21.8 505.2"/>
<circle cx="29.5" cy="497.55" r="1.75"/>
<path d="M26.6 500.4 L28.2 498.8"/>
<circle cx="29.5" cy="506.45" r="1.75"/>
<path d="M26.6 503.6 L28.2 505.2"/>
</g>
<g stroke-width="1.5">
<rect x="18.9" y="535.95" width="4.75" height="4.75" rx="1.2"/>
<rect x="18.9" y="543.2" width="4.75" height="4.75" rx="1.2"/>
<rect x="26.25" y="535.95" width="4.75" height="4.75" rx="1.2"/>
<rect x="26.25" y="543.2" width="4.75" height="4.75" rx="1.2"/>
</g>
<g stroke-width="1.4" stroke-linecap="butt"><rect x="18.8" y="577.5" width="12.5" height="8.9" rx=".8"/><path d="M18.8 581.3 H31.3"/><path d="M21.4 581.3 V585 M28.6 581.3 V585" stroke-width="1.2"/><path d="M25 581.3 V585" stroke="#bbb" stroke-width="1.2"/><path d="M21 579.5 H22 M23 579.5 H24 M26.3 579.5 H28.8" stroke-width="1"/></g>
<g stroke-width="1.2"><circle cx="23.9" cy="618.8" r="2.55"/><path d="M19.7 623.6 H28.2 a.9 .9 0 0 1 .9 .9 C29.1 627 27 628.4 23.95 628.4 C20.9 628.4 18.8 627 18.8 624.5 a.9 .9 0 0 1 .9 -.9 Z"/><path d="M28.8 617 Q30.2 618.7 28.8 620.4" stroke-width="1.1"/><path d="M30.9 615.1 Q33.4 618.7 30.9 622.3" stroke-width="1.1"/></g>
<g stroke-width="1.15"><path d="M18.41 660.63 A8.8 8.8 0 0 1 31.69 660.63"/><path d="M19.95 662.70 A6.3 6.3 0 0 1 28.20 660.94"/><path d="M21.67 664.45 A3.9 3.9 0 0 1 25.73 662.56"/></g>
<path d="M31.09 664.84 L32.25 665.02 L32.25 666.18 L31.09 666.36 L30.50 667.37 L30.93 668.48 L29.93 669.05 L29.18 668.13 L28.02 668.13 L27.27 669.05 L26.27 668.48 L26.70 667.37 L26.11 666.36 L24.95 666.18 L24.95 665.02 L26.11 664.84 L26.70 663.83 L26.27 662.72 L27.27 662.15 L28.02 663.07 L29.18 663.07 L29.93 662.15 L30.93 662.72 L30.50 663.83 Z M29.3 665.6 a.7 .7 0 1 0 -1.4 0 a.7 .7 0 1 0 1.4 0 Z" fill="#fff" fill-rule="evenodd" stroke-width=".5"/>
<path d="M23.49 706.60 L23.81 704.66 L26.13 704.66 L26.45 706.60 L27.96 707.47 L29.80 706.78 L30.96 708.78 L29.44 710.03 L29.44 711.77 L30.96 713.02 L29.80 715.02 L27.96 714.33 L26.45 715.20 L26.13 717.14 L23.81 717.14 L23.49 715.20 L21.98 714.33 L20.14 715.02 L18.98 713.02 L20.50 711.77 L20.50 710.03 L18.98 708.78 L20.14 706.78 L21.98 707.47 Z" stroke-width="1.25"/>
<rect x="23.27" y="709.2" width="3.4" height="3.4" rx="1.1" stroke-width="1.1"/>
</g>
<circle cx="25" cy="807.9" r="10.7" stroke-width="1.6"/>
<circle cx="25" cy="803.8" r="3" fill="#fff" stroke="none"/>
<path d="M19.1 809 a.8 .8 0 0 1 .8 -.8 H30.1 a.8 .8 0 0 1 .8 .8 C30.9 812.8 28.6 815.2 25 815.2 C21.4 815.2 19.1 812.8 19.1 809 Z" fill="#fff" stroke="none"/>
<path d="M259.2 165.6 L263 161.8 L266.8 165.6" stroke-width="1.3"/>
<path d="M259.2 403.5 L263 407.2 L266.8 403.5" stroke-width="1.3"/>
<path d="M259.2 443.5 L263 447.2 L266.8 443.5" stroke-width="1.3"/>
<path d="M259.2 540.4 L263 544.1 L266.8 540.4" stroke-width="1.3"/>
<path d="M259.2 580.3 L263 584.0 L266.8 580.3" stroke-width="1.3"/>
<path d="M259.2 620.4 L263 624.1 L266.8 620.4" stroke-width="1.3"/>
<path d="M259.2 660.4 L263 664.1 L266.8 660.4" stroke-width="1.3"/>
<path d="M259.3 807.6 L263 804.3 L266.7 807.6 M259.3 810.3 L263 813.6 L266.7 810.3" stroke-width="1.15"/>
</svg>
<div class="tx" style="left:21px;top:743.6px;font-size:15.8px;line-height:1;color:#eee">?</div>
</div></div></body></html>
